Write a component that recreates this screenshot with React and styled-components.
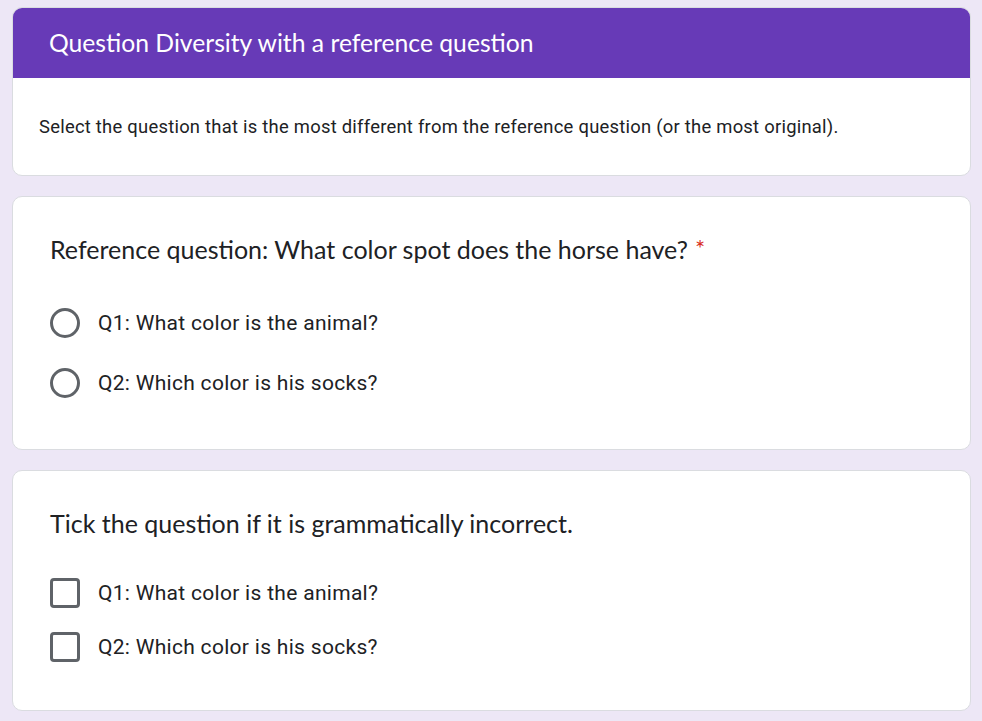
import React from "react";
import styled, { createGlobalStyle } from "styled-components";

const Global = createGlobalStyle`
  html, body { margin: 0; padding: 0; background: #ede7f6; }
  body { font-family: Roboto, "Liberation Sans", sans-serif; color: #202124; }
`;

const Page = styled.div`
  display: flex;
  flex-direction: column;
  gap: 20px;
  padding: 7px 11px 12px 12px;
`;

const Card = styled.section`
  background: #fff;
  border: 1px solid #dadce0;
  border-radius: 10px;
  overflow: hidden;
  display: flex;
  flex-direction: column;
`;

const Header = styled.div`
  background: #673ab7;
  height: 71px;
  margin: -1px -1px 0 -1px;
  display: flex;
  align-items: center;
  padding-left: 37px;
  border-radius: 10px 10px 0 0;
`;

const Title = styled.h1`
  margin: 0;
  font-family: Lato, "Open Sans", sans-serif;
  font-weight: 400;
  font-size: 24.7px;
  color: #fff;
`;

const Description = styled.p`
  margin: 0;
  padding: 38px 27px 37px 26px;
  font-size: 18.4px;
  letter-spacing: 0.25px;
  line-height: 22px;
  color: #202124;
`;

const QuestionBody = styled.div`
  display: flex;
  flex-direction: column;
  padding: ${(p) => p.$pad};
`;

const QuestionTitle = styled.h2`
  margin: 0 0 ${(p) => p.$gap}px 0;
  font-family: Lato, "Open Sans", sans-serif;
  font-weight: 400;
  font-size: 25px;
  line-height: 32px;
  color: #202124;
`;

const Star = styled.span`
  color: #d93025;
  font-size: 24px;
  margin-left: 7px;
  vertical-align: 2px;
`;

const Options = styled.div`
  display: flex;
  flex-direction: column;
  gap: ${(p) => p.$gap}px;
`;

const Option = styled.label`
  display: flex;
  align-items: center;
  height: 40px;
  gap: 18px;
  font-size: 21px;
  letter-spacing: 0.3px;
  color: #202124;
`;

const Radio = styled.span`
  width: 30px;
  height: 30px;
  box-sizing: border-box;
  border: 3px solid #5f6368;
  border-radius: 50%;
  flex: none;
`;

const Check = styled.span`
  width: 30px;
  height: 30px;
  box-sizing: border-box;
  border: 3px solid #5f6368;
  border-radius: 4px;
  flex: none;
`;

const options = ["Q1: What color is the animal?", "Q2: Which color is his socks?"];

export default function App() {
  return (
    <>
      <Global />
      <Page>
        <Card>
          <Header>
            <Title>Question Diversity with a reference question</Title>
          </Header>
          <Description>
            Select the question that is the most different from the reference question (or the most original).
          </Description>
        </Card>
        <Card>
          <QuestionBody $pad="35px 38px 46px 37px">
            <QuestionTitle $gap={38}>
              Reference question: What color spot does the horse have?<Star>*</Star>
            </QuestionTitle>
            <Options $gap={20}>
              {options.map((o) => (
                <Option key={o}>
                  <Radio />
                  {o}
                </Option>
              ))}
            </Options>
          </QuestionBody>
        </Card>
        <Card>
          <QuestionBody $pad="36px 38px 43px 37px">
            <QuestionTitle $gap={34}>Tick the question if it is grammatically incorrect.</QuestionTitle>
            <Options $gap={14}>
              {options.map((o) => (
                <Option key={o}>
                  <Check />
                  {o}
                </Option>
              ))}
            </Options>
          </QuestionBody>
        </Card>
      </Page>
    </>
  );
}
